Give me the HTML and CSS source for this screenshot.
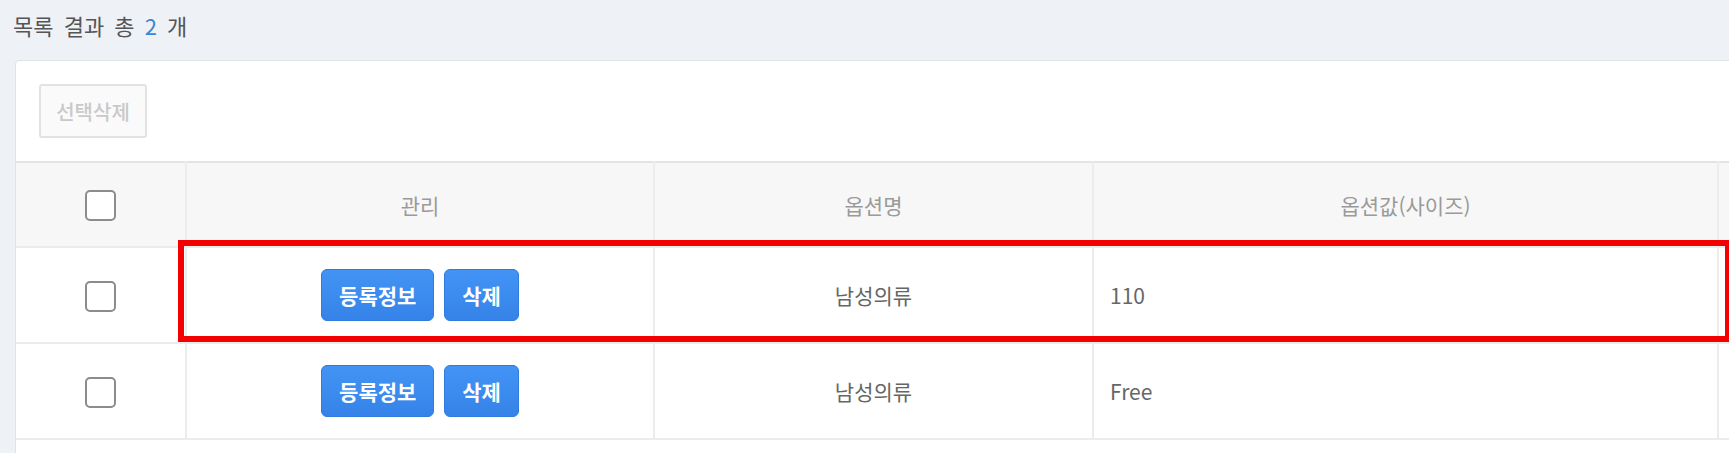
FILE: index.html
```html
<!DOCTYPE html>
<html lang="ko">
<head>
    <meta charset="UTF-8">
    <meta name="viewport" content="width=device-width, initial-scale=1.0">
    <title>옵션 목록</title>
    <link rel="stylesheet" href="styles.css">
</head>
<body>
    <div class="list-title">목록 결과 총 <span class="count">2</span> 개</div>
    <div class="panel">
        <div class="toolbar">
            <button class="btn-select-delete" disabled>선택삭제</button>
        </div>
        <div class="table-wrap">
            <table class="option-table">
                <colgroup>
                    <col class="col-check">
                    <col class="col-manage">
                    <col class="col-name">
                    <col class="col-value">
                    <col>
                </colgroup>
                <thead>
                    <tr>
                        <th><input type="checkbox" class="chk"></th>
                        <th>관리</th>
                        <th>옵션명</th>
                        <th>옵션값(사이즈)</th>
                        <th></th>
                    </tr>
                </thead>
                <tbody>
                    <tr>
                        <td><input type="checkbox" class="chk"></td>
                        <td>
                            <button class="btn-blue">등록정보</button>
                            <button class="btn-blue">삭제</button>
                        </td>
                        <td>남성의류</td>
                        <td class="left">110</td>
                        <td></td>
                    </tr>
                    <tr>
                        <td><input type="checkbox" class="chk"></td>
                        <td>
                            <button class="btn-blue">등록정보</button>
                            <button class="btn-blue">삭제</button>
                        </td>
                        <td>남성의류</td>
                        <td class="left">Free</td>
                        <td></td>
                    </tr>
                </tbody>
            </table>
            <div class="highlight"></div>
        </div>
    </div>
</body>
</html>
```

FILE: styles.css
```css
body {
    font-family: "Noto Sans CJK KR", "Noto Sans", sans-serif;
    margin: 0;
    padding: 0;
    background-color: #eef1f5;
    color: #666;
    overflow: hidden;
}
.list-title {
    height: 60px;
    line-height: 50px;
    padding-left: 13px;
    font-size: 22px;
    word-spacing: 4px;
    color: #555;
}
.count {
    color: #3a86d8;
}
.panel {
    margin-left: 15px;
    width: 1760px;
    background-color: #fff;
    border: 1px solid #dfe3e8;
    border-radius: 4px;
    padding-bottom: 30px;
}
.toolbar {
    padding: 23px 0 23px 23px;
}
.btn-select-delete {
    width: 108px;
    height: 54px;
    font-family: inherit;
    font-size: 20px;
    font-weight: 500;
    color: #c9c9c9;
    background-color: #fafafa;
    border: 2px solid #e2e2e2;
    border-radius: 3px;
}
.table-wrap {
    position: relative;
}
.option-table {
    border-collapse: collapse;
    table-layout: fixed;
    width: 100%;
    font-size: 21px;
}
.col-check { width: 170px; }
.col-manage { width: 468px; }
.col-name { width: 439px; }
.col-value { width: 625px; }
.option-table th,
.option-table td {
    border: 2px solid #ececec;
    text-align: center;
    padding: 0;
}
.option-table th:first-child,
.option-table td:first-child {
    border-left: none;
}
.option-table th {
    height: 83px;
    background-color: #f7f7f7;
    color: #9a9a9a;
    font-weight: normal;
    border-top-color: #e4e4e4;
}
.option-table td {
    height: 94px;
    color: #666;
}
.option-table td.left {
    text-align: left;
    padding-left: 16px;
}
.chk {
    appearance: none;
    -webkit-appearance: none;
    width: 31px;
    height: 31px;
    margin: 0;
    vertical-align: middle;
    border: 2px solid #8c8c8c;
    border-radius: 5px;
    background-color: #fff;
}
.btn-blue {
    height: 52px;
    padding: 0 17px;
    margin: 0 2px;
    font-family: inherit;
    font-size: 21px;
    font-weight: bold;
    color: #fff;
    background: linear-gradient(#4393f5, #3583e8);
    border: 1px solid #2f7be0;
    border-radius: 6px;
    vertical-align: middle;
}
.highlight {
    position: absolute;
    left: 162px;
    top: 79px;
    width: 1541px;
    height: 90px;
    border: 6px solid #f50000;
}
```
